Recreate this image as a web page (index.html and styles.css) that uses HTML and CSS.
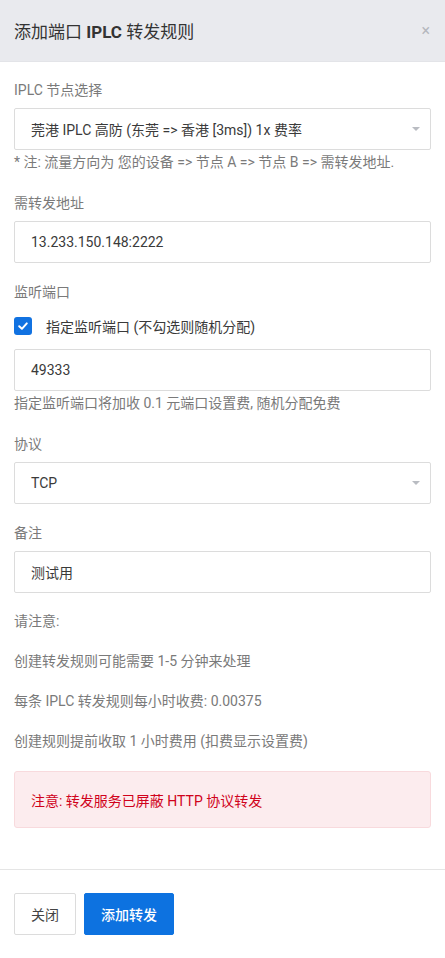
FILE: index.html
```html
<!DOCTYPE html>
<html lang="zh-CN">
  <head>
    <meta charset="UTF-8" />
    <meta name="viewport" content="width=device-width, initial-scale=1.0" />
    <title>添加端口 IPLC 转发规则</title>
    <link rel="stylesheet" href="styles.css">
  </head>
  <body>
    <div class="modal">
      <div class="modal-header">
        <h2>添加端口 <span class="strong">IPLC</span> 转发规则</h2>
        <span class="close">×</span>
      </div>
      <div class="modal-body">
        <div class="group with-help">
          <label class="label">IPLC 节点选择</label>
          <div class="field select">
            <span>莞港 IPLC 高防 (东莞 =&gt; 香港 [3ms]) 1x 费率</span>
            <i class="caret"></i>
          </div>
          <p class="help">* 注: 流量方向为 您的设备 =&gt; 节点 A =&gt; 节点 B =&gt; 需转发地址.</p>
        </div>
        <div class="group">
          <label class="label">需转发地址</label>
          <div class="field">13.233.150.148:2222</div>
        </div>
        <div class="group with-help">
          <label class="label">监听端口</label>
          <div class="check">
            <span class="box">
              <svg width="12" height="12" viewBox="0 0 12 12"><path d="M2.2 6.3 L4.9 8.8 L9.8 3.4" fill="none" stroke="#fff" stroke-width="2" stroke-linecap="round" stroke-linejoin="round"/></svg>
            </span>
            <span>指定监听端口 (不勾选则随机分配)</span>
          </div>
          <div class="field">49333</div>
          <p class="help">指定监听端口将加收 0.1 元端口设置费, 随机分配免费</p>
        </div>
        <div class="group">
          <label class="label">协议</label>
          <div class="field select">
            <span>TCP</span>
            <i class="caret"></i>
          </div>
        </div>
        <div class="group last">
          <label class="label">备注</label>
          <div class="field">测试用</div>
        </div>
        <p class="note">请注意:</p>
        <p class="note">创建转发规则可能需要 1-5 分钟来处理</p>
        <p class="note">每条 IPLC 转发规则每小时收费: 0.00375</p>
        <p class="note">创建规则提前收取 1 小时费用 (扣费显示设置费)</p>
        <div class="alert">注意: 转发服务已屏蔽 HTTP 协议转发</div>
      </div>
      <div class="modal-footer">
        <button class="btn">关闭</button>
        <button class="btn btn-primary">添加转发</button>
      </div>
    </div>
  </body>
</html>
```

FILE: styles.css
```css
body,
html {
  margin: 0;
  padding: 0;
  background-color: #ffffff;
  font-family: Roboto, "Noto Sans CJK SC", sans-serif;
  color: #333;
}
.modal {
  width: 445px;
}
.modal-header {
  height: 61px;
  background-color: #e9eaee;
  display: flex;
  align-items: center;
  justify-content: space-between;
  padding: 0 14px;
  border-bottom: 1px solid #e3e4e8;
}
.modal-header h2 {
  margin: 0;
  font-size: 17px;
  font-weight: 400;
  color: #333;
}
.modal-header .strong {
  font-weight: 700;
}
.close {
  font-size: 16px;
  color: #b5b7bd;
  margin-right: 1px;
}
.modal-body {
  padding: 18px 14px 41px;
}
.group {
  margin-bottom: 19px;
}
.group.with-help {
  margin-bottom: 21px;
}
.group.last {
  margin-bottom: 18px;
}
.label {
  display: block;
  font-size: 14px;
  line-height: 20px;
  color: #7a7a7a;
  margin-bottom: 8px;
}
.field {
  height: 40px;
  border: 1px solid #dcdcdc;
  border-radius: 2px;
  padding: 0 16px;
  display: flex;
  align-items: center;
  font-size: 14px;
  color: #3a3a3a;
}
.select {
  justify-content: space-between;
}
.caret {
  width: 0;
  height: 0;
  border-left: 4px solid transparent;
  border-right: 4px solid transparent;
  border-top: 4px solid #b9bcc2;
  margin-right: -6px;
}
.help {
  margin: 2px 0 0;
  font-size: 14px;
  line-height: 20px;
  color: #7a7a7a;
}
.check {
  display: flex;
  align-items: center;
  height: 20px;
  font-size: 14px;
  color: #3a3a3a;
  margin: 14px 0 13px;
}
.box {
  width: 18px;
  height: 18px;
  border-radius: 3px;
  background-color: #1172e1;
  display: flex;
  align-items: center;
  justify-content: center;
  margin-right: 14px;
}
.note {
  margin: 0 0 20px;
  font-size: 14px;
  line-height: 20px;
  color: #7a7a7a;
}
.alert {
  height: 55px;
  display: flex;
  align-items: center;
  padding: 0 16px;
  background-color: #fcecee;
  border: 1px solid #f8dadd;
  border-radius: 3px;
  color: #d0021b;
  font-size: 14px;
}
.modal-footer {
  border-top: 1px solid #e5e5e5;
  padding: 23px 14px;
  display: flex;
  gap: 8px;
}
.btn {
  height: 42px;
  padding: 0 16px;
  border: 1px solid #dcdcdc;
  border-radius: 2px;
  background-color: #fff;
  font-family: Roboto, "Noto Sans CJK SC", sans-serif;
  font-size: 14px;
  color: #444;
}
.btn-primary {
  background-color: #0d72e0;
  border-color: #0d72e0;
  color: #fff;
  font-weight: 500;
}
```
